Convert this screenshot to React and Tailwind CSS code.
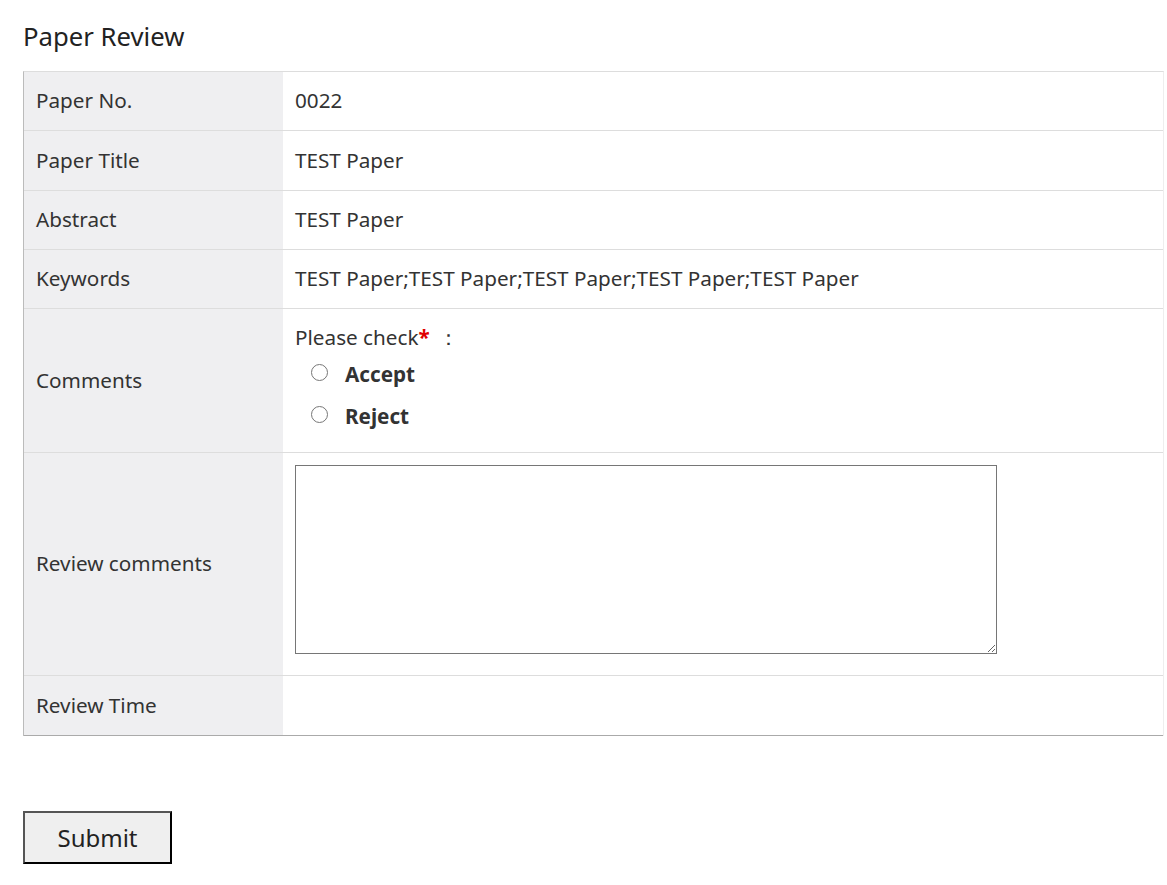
import React, { useState } from "react";

const font = { fontFamily: '"Noto Sans", "Open Sans", sans-serif' };

const Row = ({ label, children, className = "" }) => (
  <div className={`flex border-b border-[#dddddd] ${className}`}>
    <div className="w-[259px] shrink-0 bg-[#efeff1] flex items-center pl-[12px]">{label}</div>
    <div className="flex-1 flex items-center px-3">{children}</div>
  </div>
);

const App = () => {
  const [choice, setChoice] = useState("");
  const [comments, setComments] = useState("");

  return (
    <div className="min-h-screen bg-white text-[#333333] text-[20.7px]" style={font}>
      <div className="pl-[23px] pr-[3px]">
        <h2 className="text-[25.7px] text-[#222] pt-[19px] pb-[17px] leading-[35px]">Paper Review</h2>

        <div className="border-l border-[#bbbbbb] border-t border-t-[#dddddd] border-r border-r-[#eeeeee]">
          <Row label="Paper No." className="h-[59px]">0022</Row>
          <Row label="Paper Title" className="h-[60px]">TEST Paper</Row>
          <Row label="Abstract" className="h-[59px]">TEST Paper</Row>
          <Row label="Keywords" className="h-[59px]">
            TEST Paper;TEST Paper;TEST Paper;TEST Paper;TEST Paper
          </Row>
          <Row label="Comments" className="h-[144px]">
            <div className="flex flex-col">
              <div className="leading-[28px] mb-[3px]">
                Please check<span className="text-[#e00000] font-bold">*</span>
                <span className="ml-[8px]">：</span>
              </div>
              {["Accept", "Reject"].map((v) => (
                <label key={v} className="flex items-center h-[42px] pl-[16px] cursor-pointer">
                  <input
                    type="radio"
                    name="check"
                    checked={choice === v}
                    onChange={() => setChoice(v)}
                    className="w-[17px] h-[17px] m-0 mr-[17px] accent-[#555] -mt-[6px]"
                  />
                  <span className="font-bold">{v}</span>
                </label>
              ))}
            </div>
          </Row>
          <Row label="Review comments" className="h-[223px]">
            <textarea
              value={comments}
              onChange={(e) => setComments(e.target.value)}
              className="w-[702px] h-[189px] border border-[#767676] outline-none p-1 mb-[9px]"
            />
          </Row>
          <Row label="Review Time" className="h-[60px] border-b-[#aaaaaa]"></Row>
        </div>

        <button
          type="button"
          className="mt-[75px] w-[149px] h-[53px] bg-[#efefef] text-[24px] text-[#222] border-2 border-t-[#555] border-l-[#555] border-r-black border-b-black"
        >
          Submit
        </button>
      </div>
    </div>
  );
};

export default App;
